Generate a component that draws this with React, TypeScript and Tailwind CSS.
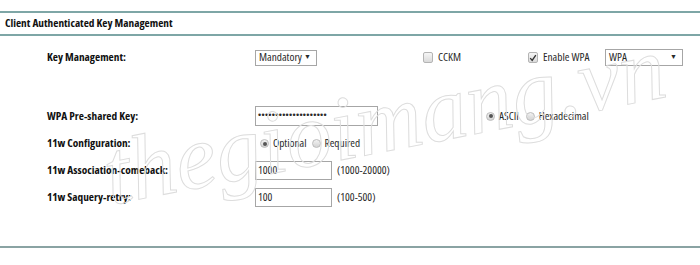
import type { ReactNode } from "react";

const font = "font-['Open_Sans',sans-serif] [font-stretch:condensed]";

const Check = ({ checked }: { checked?: boolean }) => (
  <span className="inline-flex h-[11px] w-[10px] shrink-0 items-center justify-center rounded-[2px] border border-[#b4b4b4] bg-gradient-to-b from-[#f6f6f6] to-[#dadada]">
    {checked && (
      <svg viewBox="0 0 10 10" className="h-[8px] w-[8px]">
        <path d="M1.5 5.2 L4 8 L8.5 1.5" fill="none" stroke="#333" strokeWidth="1.7" />
      </svg>
    )}
  </span>
);

const Radio = ({ checked }: { checked?: boolean }) => (
  <span className="inline-flex h-[9px] w-[9px] shrink-0 items-center justify-center rounded-full border border-[#bcbcbc] bg-gradient-to-b from-[#f2f2f2] to-[#d4d4d4]">
    {checked && <span className="h-[4px] w-[4px] rounded-full bg-[#555]" />}
  </span>
);

const Select = ({ value, w, h }: { value: string; w: string; h: string }) => (
  <div className={`flex items-center justify-between border border-[#a6a6a6] bg-white pl-[3px] pr-[5px] ${w} ${h}`}>
    <span>{value}</span>
    <span className="text-[7px]">▼</span>
  </div>
);

const Row = ({ label, children, h = "h-[27px]" }: { label: string; children?: ReactNode; h?: string }) => (
  <div className={`flex items-center ${h}`}>
    <div className="w-[255px] shrink-0 pl-[47px] font-bold">{label}</div>
    <div className="flex items-center whitespace-nowrap text-[#2a2a2a]">{children}</div>
  </div>
);

const Field = ({ value }: { value: string }) => (
  <div className="flex h-[19px] w-[77px] items-center border border-[#a6a6a6] pl-[2px]">{value}</div>
);

export default function App() {
  return (
    <div className={`relative h-[265px] w-[700px] overflow-hidden bg-white text-[11.3px] text-[#111] ${font}`}>
      <div className="pt-[11px]">
        <div className="flex h-[25px] items-center border-y-2 border-[#7ea6a6] pl-[5px] font-bold">
          Client Authenticated Key Management
        </div>
      </div>

      <div className="pt-[8px]">
        <Row label="Key Management:">
          <div className="w-[168px]">
            <Select value="Mandatory" w="w-[62px]" h="h-[16px]" />
          </div>
          <label className="flex w-[105px] items-center gap-[5px]">
            <Check /> CCKM
          </label>
          <label className="flex w-[77px] items-center gap-[5px]">
            <Check checked /> Enable WPA
          </label>
          <Select value="WPA" w="w-[78px]" h="h-[17px]" />
        </Row>

        <div className="h-[31px]" />

        <Row label="WPA Pre-shared Key:" h="h-[28px]">
          <div className="flex h-[20px] w-[123px] items-center border border-[#a6a6a6] pl-[2px] font-['Liberation_Sans',sans-serif] text-[9px] tracking-[0.3px]">
            ••••••••••••••••••••
          </div>
          <label className="ml-[108px] flex items-center gap-[4px]">
            <Radio checked /> ASCII
          </label>
          <label className="ml-[7px] flex items-center gap-[4px]">
            <Radio /> Hexadecimal
          </label>
        </Row>

        <Row label="11w Configuration:">
          <label className="ml-[5px] flex items-center gap-[4px]">
            <Radio checked /> Optional
          </label>
          <label className="ml-[5px] flex items-center gap-[4px]">
            <Radio /> Required
          </label>
        </Row>

        <Row label="11w Association-comeback:">
          <Field value="1000" />
          <span className="ml-[5px]">(1000-20000)</span>
        </Row>

        <Row label="11w Saquery-retry:">
          <Field value="100" />
          <span className="ml-[5px]">(100-500)</span>
        </Row>
      </div>

      <div className="absolute left-0 right-0 top-[246px] border-t-2 border-[#8aa3a3]" />

      <div className="pointer-events-none absolute left-[110px] top-[128px] origin-[0_75px] -rotate-[11deg] font-['Liberation_Serif',serif] text-[92px] italic leading-none text-transparent [-webkit-text-stroke:1px_#dddddd]">
        thegioimang.vn
      </div>
    </div>
  );
}
